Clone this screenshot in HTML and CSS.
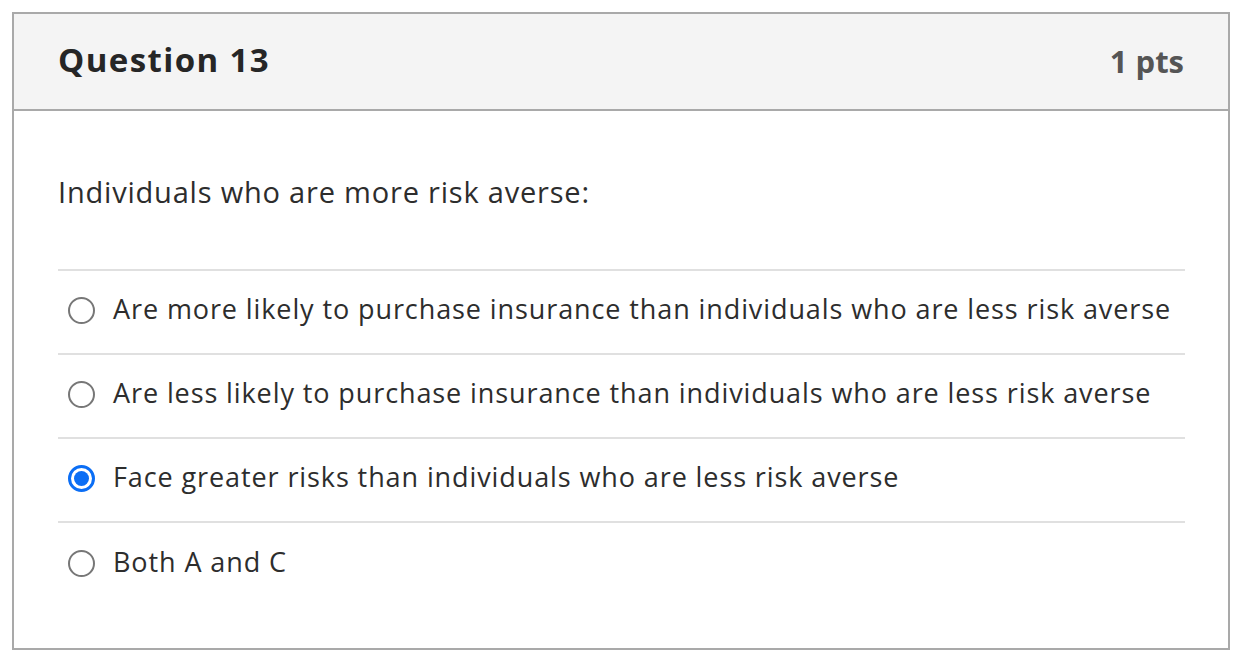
FILE: index.html
```html
<!DOCTYPE html>
<html>
<head>
<meta charset="utf-8">
<link rel="stylesheet" href="styles.css">
</head>
<body>
<div class="question">
  <div class="header">
    <h2 class="title">Question 13</h2>
    <div class="pts">1 pts</div>
  </div>
  <div class="content">
    <p class="prompt">Individuals who are more risk averse:</p>
    <div class="answers">
      <label class="answer"><span class="radio"></span><span class="text">Are more likely to purchase insurance than individuals who are less risk averse</span></label>
      <label class="answer"><span class="radio"></span><span class="text">Are less likely to purchase insurance than individuals who are less risk averse</span></label>
      <label class="answer"><span class="radio checked"></span><span class="text">Face greater risks than individuals who are less risk averse</span></label>
      <label class="answer"><span class="radio"></span><span class="text">Both A and C</span></label>
    </div>
  </div>
</div>
</body>
</html>
```
FILE: styles.css
```css
* { box-sizing: border-box; }
body {
  margin: 0;
  background: #fff;
  font-family: "Open Sans", "Noto Sans", sans-serif;
  color: #2d2d2d;
}
.question {
  margin: 12px 11px 0 12px;
  border: 2px solid #a9a9a9;
  height: 638px;
}
.header {
  display: flex;
  justify-content: space-between;
  align-items: center;
  height: 97px;
  background: #f4f4f4;
  border-bottom: 2px solid #a9a9a9;
  padding: 0 44px 0 44px;
}
.title {
  margin: 0 0 5px;
  font-size: 33px;
  font-weight: 700;
  letter-spacing: 1.4px;
  color: #262626;
}
.pts {
  margin-bottom: 2px;
  font-size: 31px;
  font-weight: 700;
  color: #555;
}
.content {
  padding: 0 43px 0 44px;
}
.prompt {
  margin: 0;
  padding-top: 63px;
  height: 158px;
  font-size: 29px;
  line-height: 36px;
  letter-spacing: 0.8px;
  color: #2d2d2d;
}
.answers {
  border-top: 2px solid #e0e0e0;
}
.answer {
  display: flex;
  align-items: center;
  height: 84px;
  border-bottom: 2px solid #e0e0e0;
  padding-left: 10px;
  padding-bottom: 8px;
}
.answer:last-child { border-bottom: none; }
.radio {
  width: 27px;
  height: 27px;
  border: 2px solid #777;
  border-radius: 50%;
  flex: none;
  margin-right: 18px;
  position: relative;
  top: 2px;
}
.radio.checked {
  border: 3px solid #0b6ef5;
}
.radio.checked::after {
  content: "";
  position: absolute;
  left: 3px;
  top: 3px;
  width: 15px;
  height: 15px;
  border-radius: 50%;
  background: #0b6ef5;
}
.text {
  font-size: 27px;
  letter-spacing: 0.9px;
  color: #2d2d2d;
}
```
